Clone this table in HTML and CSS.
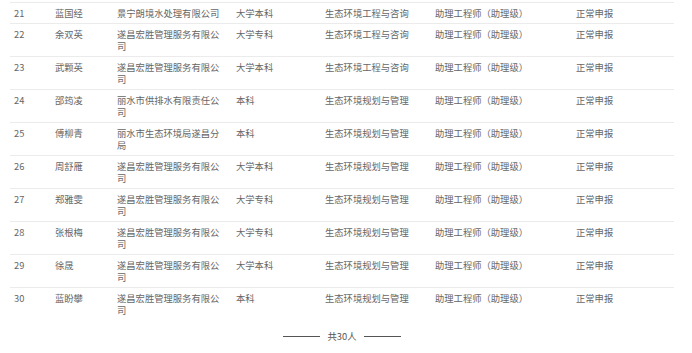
FILE: index.html
```html
<!DOCTYPE html>
<html lang="zh">
<head>
<meta charset="utf-8">
<link rel="stylesheet" href="styles.css">
</head>
<body>
<div class="wrap">
<table class="list">
<colgroup>
<col class="c1"><col class="c2"><col class="c3"><col class="c4"><col class="c5"><col class="c6"><col class="c7">
</colgroup>
<tbody>
<tr><td>21</td><td>蓝国经</td><td>景宁朗境水处理有限公司</td><td>大学本科</td><td>生态环境工程与咨询</td><td>助理工程师（助理级）</td><td>正常申报</td></tr>
<tr><td>22</td><td>余双英</td><td>遂昌宏胜管理服务有限公司</td><td>大学专科</td><td>生态环境工程与咨询</td><td>助理工程师（助理级）</td><td>正常申报</td></tr>
<tr><td>23</td><td>武颗英</td><td>遂昌宏胜管理服务有限公司</td><td>大学本科</td><td>生态环境工程与咨询</td><td>助理工程师（助理级）</td><td>正常申报</td></tr>
<tr><td>24</td><td>邵筠凌</td><td>丽水市供排水有限责任公司</td><td>本科</td><td>生态环境规划与管理</td><td>助理工程师（助理级）</td><td>正常申报</td></tr>
<tr><td>25</td><td>傅柳青</td><td>丽水市生态环境局遂昌分局</td><td>本科</td><td>生态环境规划与管理</td><td>助理工程师（助理级）</td><td>正常申报</td></tr>
<tr><td>26</td><td>周舒雁</td><td>遂昌宏胜管理服务有限公司</td><td>大学本科</td><td>生态环境规划与管理</td><td>助理工程师（助理级）</td><td>正常申报</td></tr>
<tr><td>27</td><td>郑雅雯</td><td>遂昌宏胜管理服务有限公司</td><td>大学专科</td><td>生态环境规划与管理</td><td>助理工程师（助理级）</td><td>正常申报</td></tr>
<tr><td>28</td><td>张根梅</td><td>遂昌宏胜管理服务有限公司</td><td>大学专科</td><td>生态环境规划与管理</td><td>助理工程师（助理级）</td><td>正常申报</td></tr>
<tr><td>29</td><td>徐晟</td><td>遂昌宏胜管理服务有限公司</td><td>大学本科</td><td>生态环境规划与管理</td><td>助理工程师（助理级）</td><td>正常申报</td></tr>
<tr><td>30</td><td>蓝盼攀</td><td>遂昌宏胜管理服务有限公司</td><td>本科</td><td>生态环境规划与管理</td><td>助理工程师（助理级）</td><td>正常申报</td></tr>
</tbody>
</table>
<div class="total"><span class="rule"></span><span class="count">共30人</span><span class="rule"></span></div>
</div>
</body>
</html>
```
FILE: styles.css
```css
html, body {
  margin: 0;
  padding: 0;
  background: #ffffff;
}
body {
  font-family: "Noto Sans CJK SC", "Noto Sans", sans-serif;
  font-size: 9.3px;
  line-height: 12px;
  color: #666666;
}
.wrap {
  width: 664px;
  margin: 2px 0 0 10px;
}
.list {
  width: 664px;
  border-collapse: collapse;
  table-layout: fixed;
}
.c1 { width: 41px; }
.c2 { width: 62px; }
.c3 { width: 119px; }
.c4 { width: 89px; }
.c5 { width: 110px; }
.c6 { width: 141px; }
.c7 { width: 102px; }
.list tr {
  border-top: 1px solid #ebebeb;
}
.list td {
  padding: 4px 8px 4px 4px;
  vertical-align: top;
  text-align: left;
}
.total {
  display: flex;
  align-items: center;
  justify-content: center;
  gap: 8px;
  margin-top: 10px;
  color: #555555;
}
.rule {
  width: 37px;
  height: 1px;
  background: #555555;
}
```
